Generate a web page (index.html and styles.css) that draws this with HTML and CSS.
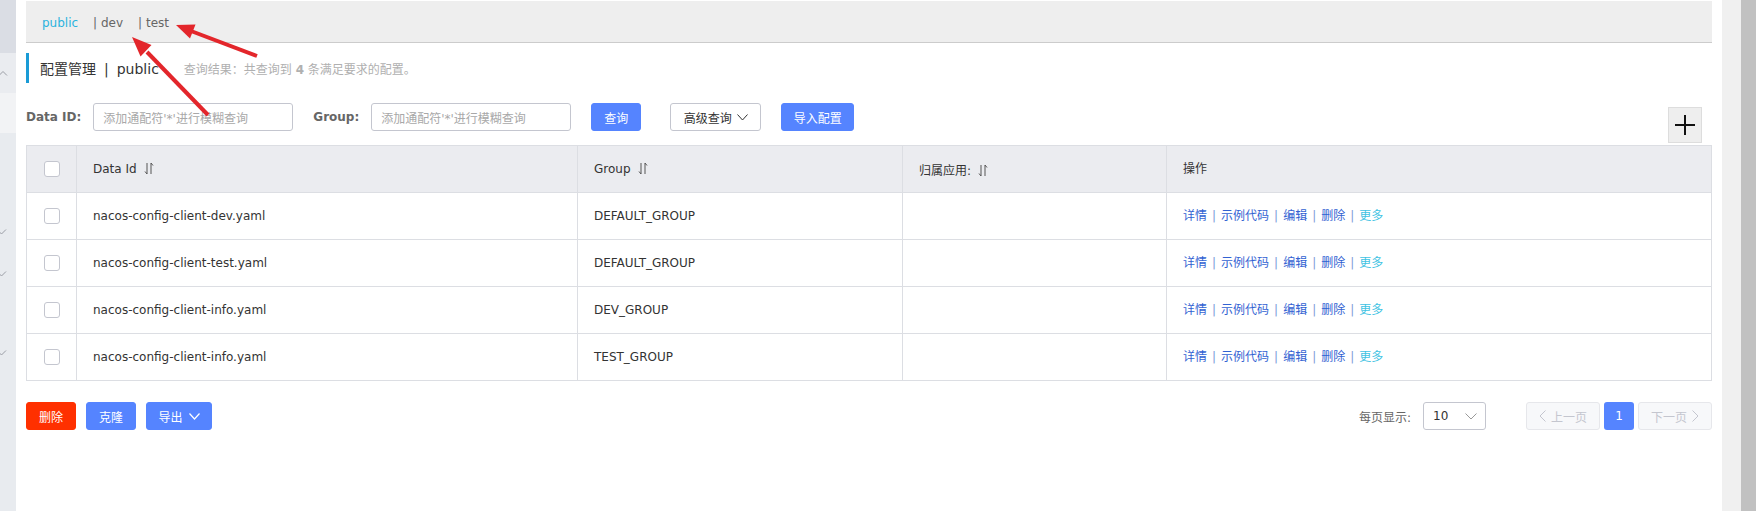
FILE: index.html
```html
<!DOCTYPE html>
<html lang="zh-CN">
<head>
<meta charset="utf-8">
<title>配置管理</title>
<link rel="stylesheet" href="styles.css">
</head>
<body>
<div class="page">
  <aside class="sidebar">
    <div class="sb-top"></div>
    <div class="sb-open">
      <svg class="sb-up" width="8" height="6" viewBox="0 0 8 6"><polyline points="-1,5.5 3,1.5 7,5.5" fill="none" stroke="#9a9da5" stroke-width="1"/></svg>
    </div>
    <div class="sb-light"></div>
    <div class="sb-rest">
      <svg class="sb-down d1" width="8" height="6" viewBox="0 0 8 6"><polyline points="-3,0.5 1.5,5 6,0.5" fill="none" stroke="#9a9da5" stroke-width="1"/></svg>
      <svg class="sb-down d2" width="8" height="6" viewBox="0 0 8 6"><polyline points="-3,0.5 1.5,5 6,0.5" fill="none" stroke="#9a9da5" stroke-width="1"/></svg>
      <svg class="sb-down d3" width="8" height="6" viewBox="0 0 8 6"><polyline points="-3,0.5 1.5,5 6,0.5" fill="none" stroke="#9a9da5" stroke-width="1"/></svg>
    </div>
  </aside>

  <main class="main">
    <nav class="tabs">
      <span class="tab active">public</span>
      <span class="tab">| dev</span>
      <span class="tab">| test</span>
    </nav>

    <div class="title">
      <span class="title-main">配置管理<span class="title-sep">|</span>public</span>
      <span class="title-sub">查询结果：共查询到 <b>4</b> 条满足要求的配置。</span>
    </div>

    <div class="search">
      <label class="lbl">Data ID:</label>
      <div class="input"><span class="ph">添加通配符'*'进行模糊查询</span></div>
      <label class="lbl lbl-group">Group:</label>
      <div class="input"><span class="ph">添加通配符'*'进行模糊查询</span></div>
      <button class="btn btn-primary btn-query">查询</button>
      <button class="btn btn-normal btn-adv">高级查询<svg class="chev" width="11" height="7" viewBox="0 0 11 7"><polyline points="0.5,0.5 5.5,6 10.5,0.5" fill="none" stroke="#333" stroke-width="1"/></svg></button>
      <button class="btn btn-primary btn-import">导入配置</button>
      <button class="plus" aria-label="add"><svg width="22" height="22" viewBox="0 0 22 22"><path d="M1 11H21M11 1V21" stroke="#111" stroke-width="2"/></svg></button>
    </div>

    <table class="grid">
      <colgroup>
        <col class="c-check"><col class="c-id"><col class="c-group"><col class="c-app"><col class="c-op">
      </colgroup>
      <thead>
        <tr>
          <th class="chk"><span class="cb"></span></th>
          <th>Data Id<svg class="sort" width="10" height="13" viewBox="0 0 10 13"><path d="M3 1V12L1 9.5M7 12V1L9 3.5" stroke="#555" fill="none" stroke-width="1"/></svg></th>
          <th>Group<svg class="sort" width="10" height="13" viewBox="0 0 10 13"><path d="M3 1V12L1 9.5M7 12V1L9 3.5" stroke="#555" fill="none" stroke-width="1"/></svg></th>
          <th>归属应用:<svg class="sort" width="10" height="13" viewBox="0 0 10 13"><path d="M3 1V12L1 9.5M7 12V1L9 3.5" stroke="#555" fill="none" stroke-width="1"/></svg></th>
          <th class="ops-h">操作</th>
        </tr>
      </thead>
      <tbody>
        <tr>
          <td class="chk"><span class="cb"></span></td>
          <td>nacos-config-client-dev.yaml</td>
          <td>DEFAULT_GROUP</td>
          <td></td>
          <td class="ops"><a class="lk">详情</a><span class="sep">|</span><a class="lk">示例代码</a><span class="sep">|</span><a class="lk">编辑</a><span class="sep">|</span><a class="lk">删除</a><span class="sep">|</span><a class="lk more">更多</a></td>
        </tr>
        <tr>
          <td class="chk"><span class="cb"></span></td>
          <td>nacos-config-client-test.yaml</td>
          <td>DEFAULT_GROUP</td>
          <td></td>
          <td class="ops"><a class="lk">详情</a><span class="sep">|</span><a class="lk">示例代码</a><span class="sep">|</span><a class="lk">编辑</a><span class="sep">|</span><a class="lk">删除</a><span class="sep">|</span><a class="lk more">更多</a></td>
        </tr>
        <tr>
          <td class="chk"><span class="cb"></span></td>
          <td>nacos-config-client-info.yaml</td>
          <td>DEV_GROUP</td>
          <td></td>
          <td class="ops"><a class="lk">详情</a><span class="sep">|</span><a class="lk">示例代码</a><span class="sep">|</span><a class="lk">编辑</a><span class="sep">|</span><a class="lk">删除</a><span class="sep">|</span><a class="lk more">更多</a></td>
        </tr>
        <tr>
          <td class="chk"><span class="cb"></span></td>
          <td>nacos-config-client-info.yaml</td>
          <td>TEST_GROUP</td>
          <td></td>
          <td class="ops"><a class="lk">详情</a><span class="sep">|</span><a class="lk">示例代码</a><span class="sep">|</span><a class="lk">编辑</a><span class="sep">|</span><a class="lk">删除</a><span class="sep">|</span><a class="lk more">更多</a></td>
        </tr>
      </tbody>
    </table>

    <div class="footer">
      <div class="batch">
        <button class="btn btn-danger btn-sm">删除</button>
        <button class="btn btn-primary btn-sm">克隆</button>
        <button class="btn btn-primary btn-export">导出<svg class="chev" width="11" height="7" viewBox="0 0 11 7"><polyline points="0.5,0.5 5.5,6 10.5,0.5" fill="none" stroke="#fff" stroke-width="1.2"/></svg></button>
      </div>
      <div class="pager">
        <span class="pg-label">每页显示:</span>
        <div class="select"><span>10</span><svg width="12" height="7" viewBox="0 0 12 7"><polyline points="0.5,0.5 6,6 11.5,0.5" fill="none" stroke="#999" stroke-width="1"/></svg></div>
        <button class="pg-btn pg-prev"><svg width="7" height="12" viewBox="0 0 7 12"><polyline points="6.5,0.5 1,6 6.5,11.5" fill="none" stroke="#c4c6cf" stroke-width="1"/></svg>上一页</button>
        <button class="pg-num">1</button>
        <button class="pg-btn pg-next">下一页<svg width="7" height="12" viewBox="0 0 7 12"><polyline points="0.5,0.5 6,6 0.5,11.5" fill="none" stroke="#c4c6cf" stroke-width="1"/></svg></button>
      </div>
    </div>
  </main>

  <div class="track"></div>
  <div class="thumb"></div>

  <svg class="arrows" width="1756" height="511" viewBox="0 0 1756 511">
    <line x1="257" y1="56" x2="191" y2="31" stroke="#e3262b" stroke-width="4"/>
    <polygon points="176,25 195.5,24.5 190,38.5" fill="#e3262b"/>
    <line x1="208" y1="115" x2="147" y2="52" stroke="#e3262b" stroke-width="4"/>
    <polygon points="132,37 151.5,45 140.5,56.5" fill="#e3262b"/>
  </svg>
</div>
</body>
</html>
```

FILE: styles.css
```css
* { box-sizing: border-box; }
html, body { margin: 0; padding: 0; }
body {
  font-family: "DejaVu Sans", "Noto Sans CJK SC", sans-serif;
  font-size: 12px;
  color: #333;
  background: #fff;
}

.page {
  display: flex;
  height: 511px;
  position: relative;
  overflow: hidden;
}

/* sidebar */
.sidebar {
  width: 16px;
  flex: none;
  display: flex;
  flex-direction: column;
  background: #e8ebef;
}
.sb-top { height: 53px; background: #dadde4; }
.sb-open { height: 40px; background: #eaecf0; display: flex; align-items: center; }
.sb-light { height: 40px; background: #f2f3f5; }
.sb-rest { display: flex; flex-direction: column; }
.sb-up, .sb-down { display: block; }
.d1 { margin-top: 96px; }
.d2 { margin-top: 36px; }
.d3 { margin-top: 73px; }

/* main */
.main {
  flex: 1;
  min-width: 0;
  padding: 0 10px;
}
.track { width: 19px; flex: none; background: #f0f0f0; }
.thumb { width: 15px; flex: none; background: #c1c1c1; }

/* tabs */
.tabs {
  margin-top: 1px;
  height: 42px;
  background: #eee;
  border-bottom: 1px solid #ccc;
  display: flex;
  align-items: center;
  padding-left: 16px;
  padding-top: 2px;
}
.tab { color: #666; margin-right: 15px; white-space: nowrap; }
.tab.active { color: #2bb3de; }

/* title */
.title {
  margin-top: 10px;
  height: 30px;
  border-left: 3px solid #1a9bd6;
  padding-left: 11px;
  display: flex;
  align-items: center;
}
.title-main { font-size: 14px; color: #333; }
.title-sep { margin: 0 8px; }
.title-sub { margin-left: 25px; color: #b0b0b0; font-size: 12px; }
.title-sub b { font-weight: bold; }

/* search */
.search {
  margin-top: 20px;
  display: flex;
  align-items: flex-start;
}
.lbl {
  font-weight: bold;
  color: #666;
  height: 28px;
  line-height: 28px;
  margin-right: 12px;
}
.lbl-group { margin-left: 20px; }
.input {
  width: 200px;
  height: 28px;
  border: 1px solid #c4c6cf;
  border-radius: 3px;
  padding-left: 9px;
  display: flex;
  align-items: center;
  background: #fff;
}
.ph { color: #a8a8a8; white-space: nowrap; }

.btn {
  height: 28px;
  border-radius: 3px;
  font-family: inherit;
  font-size: 12px;
  padding: 0;
  border: 1px solid transparent;
  display: inline-flex;
  align-items: center;
  justify-content: center;
  cursor: pointer;
}
.btn-primary { background: #5584ff; color: #fff; border-color: #5584ff; }
.btn-danger { background: #ff3000; color: #fff; border-color: #ff3000; }
.btn-normal { background: #fff; color: #333; border-color: #c4c6cf; }
.btn-query { width: 50px; margin-left: 20px; }
.btn-adv { width: 91px; margin-left: 29px; }
.btn-adv .chev { margin-left: 5px; }
.btn-import { width: 73px; margin-left: 20px; }

.plus {
  margin-left: auto;
  margin-right: 10px;
  margin-top: 4px;
  width: 34px;
  height: 36px;
  background: #eee;
  border: 1px solid #ddd;
  padding: 0;
  display: flex;
  align-items: center;
  justify-content: center;
}

/* table */
.grid {
  margin-top: 2px;
  width: 100%;
  border-collapse: collapse;
  table-layout: fixed;
  border: 1px solid #dcdee3;
}
.c-check { width: 50px; }
.c-id { width: 501px; }
.c-group { width: 325px; }
.c-app { width: 264px; }
.grid th, .grid td {
  border: 1px solid #dcdee3;
  height: 47px;
  padding: 0 16px;
  text-align: left;
  font-weight: normal;
  font-size: 12px;
  color: #333;
  white-space: nowrap;
}
.grid th { background: #ebecf0; }
.grid .chk { padding: 0; text-align: center; }
.grid .ops, .grid .ops-h { padding-bottom: 3px; }
.cb {
  display: inline-block;
  width: 16px;
  height: 16px;
  border: 1px solid #c4c6cf;
  border-radius: 3px;
  background: #fff;
  vertical-align: middle;
}
.sort { margin-left: 7px; vertical-align: -2px; }

.lk { color: #3262d2; }
.lk.more { color: #3fc3e3; }
.sep { color: #7e9bd8; margin: 0 5px; }

/* footer */
.footer {
  margin-top: 21px;
  display: flex;
  justify-content: space-between;
  align-items: center;
}
.batch { display: flex; gap: 10px; }
.btn-sm { width: 50px; }
.btn-export { width: 66px; }
.btn-export .chev { margin-left: 6px; }

.pager { display: flex; align-items: center; }
.pg-label { color: #666; margin-right: 12px; }
.select {
  width: 63px;
  height: 28px;
  border: 1px solid #c4c6cf;
  border-radius: 3px;
  display: flex;
  align-items: center;
  justify-content: space-between;
  padding: 0 8px 0 9px;
  font-size: 12px;
  color: #333;
}
.pg-btn {
  width: 74px;
  height: 28px;
  border: 1px solid #e6e7eb;
  border-radius: 3px;
  background: #f7f8fa;
  color: #c4c6cf;
  font-family: inherit;
  font-size: 12px;
  padding: 0;
  display: inline-flex;
  align-items: center;
  justify-content: center;
  gap: 5px;
}
.pg-prev { margin-left: 40px; }
.pg-num {
  width: 30px;
  height: 28px;
  margin: 0 4px;
  border: none;
  border-radius: 3px;
  background: #5584ff;
  color: #fff;
  font-family: inherit;
  font-size: 12px;
  padding: 0;
}

/* annotation arrows */
.arrows {
  position: absolute;
  left: 0;
  top: 0;
  pointer-events: none;
}
```
